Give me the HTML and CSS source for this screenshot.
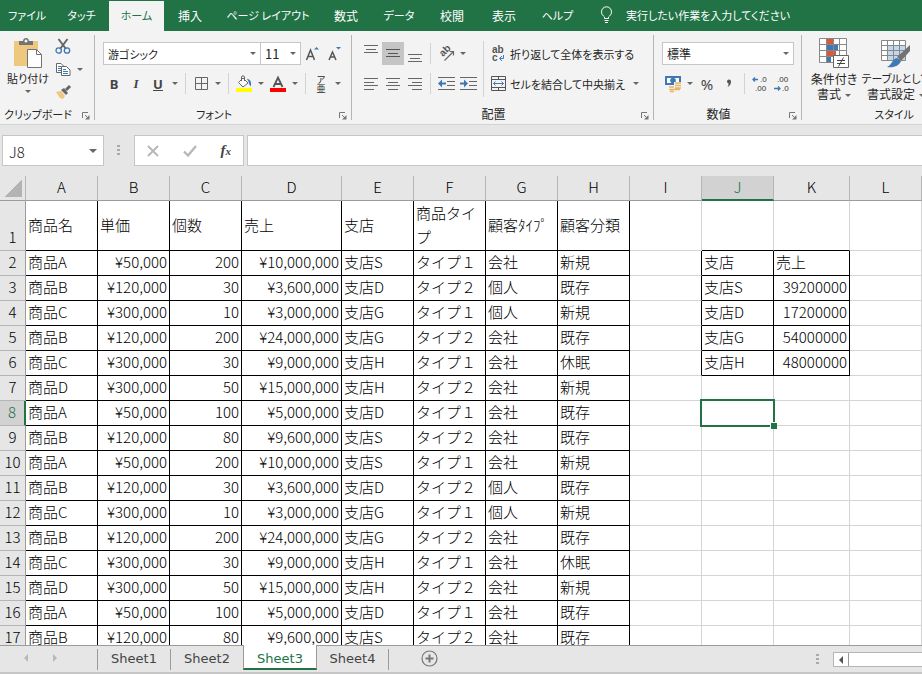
FILE: index.html
```html
<!DOCTYPE html>
<html lang="ja">
<head>
    <meta charset="UTF-8">
    <title>Sheet3</title>
    <link rel="stylesheet" href="styles.css">
</head>
<body>
<nav class="menu">
    <button class="menu-tab kana">ファイル</button>
    <button class="menu-tab kana">タッチ</button>
    <button class="menu-tab kana active">ホーム</button>
    <button class="menu-tab">挿入</button>
    <button class="menu-tab kana">ページ レイアウト</button>
    <button class="menu-tab">数式</button>
    <button class="menu-tab kana">データ</button>
    <button class="menu-tab">校閲</button>
    <button class="menu-tab">表示</button>
    <button class="menu-tab kana">ヘルプ</button>
    <button class="tell-me kana">
        <svg width="13" height="18" viewBox="0 0 13 18" fill="none" stroke="#fff"><path d="M4.500 12.500V11C3 9.500 1.500 8.500 1.500 5.800A5 5 0 0 1 11.500 5.800C11.500 8.500 10 9.500 8.500 11V12.500ZM4.500 14.500H8.500M5 16.500H8"/></svg>
        <span>実行したい作業を入力してください</span>
    </button>
</nav>

<div class="ribbon">
    <section class="group clipboard">
        <div class="group-body">
            <button class="big-btn kana">
                <svg width="30" height="31" viewBox="0 0 30 31"><path d="M1 3H25V28H1Z" fill="#edc87e"/><path d="M6 7V3H10C10-1 16-1 16 3H20V7Z" fill="#737373"/><circle cx="13" cy="3" r="1.500" fill="#f3f3f3"/><path d="M14.500 11.500H23.500L28.500 16.500V29.500H14.500Z" fill="#fff" stroke="#737373"/><path d="M23.500 11.500V16.500H28.500" fill="none" stroke="#737373"/></svg>
                <span>貼り付け</span>
                <i class="caret"></i>
            </button>
            <div class="clip-side">
                <button class="icon-btn" aria-label="切り取り"><svg width="16" height="16" viewBox="0 0 16 16" fill="none"><path d="M3.500 0L11 10M12.500 0L5 10" stroke="#666" stroke-width="2"/><circle cx="3.700" cy="11.500" r="2.700" stroke="#3f79b5" stroke-width="1.300"/><circle cx="12" cy="11.500" r="2.700" stroke="#3f79b5" stroke-width="1.300"/></svg></button>
                <div class="tools">
                    <button class="icon-btn" aria-label="コピー"><svg width="16" height="15" viewBox="0 0 16 15"><path d="M1.500 1.500H6L9.500 5V10.500H1.500Z" fill="#fff" stroke="#666"/><path d="M3 4.500H6M3 6.500H6M3 8.500H6" stroke="#3f79b5"/><path d="M6.500 4.500H11.500L15 8V13.500H6.500Z" fill="#fff" stroke="#666"/><path d="M8 7.500H11M8 9.500H13M8 11.500H13" stroke="#3f79b5"/></svg></button>
                    <button class="caret-btn" aria-label="コピーのオプション"><i class="caret"></i></button>
                </div>
                <button class="icon-btn" aria-label="書式のコピー"><svg width="17" height="15" viewBox="0 0 17 15"><path d="M1 7L6 6L10 11L8 14L5 13Z" fill="#edc87e"/><path d="M6 5L9 3L13 8L11 10Z" fill="#666"/><path d="M11 5L15 1" stroke="#666" stroke-width="3"/></svg></button>
            </div>
        </div>
        <footer class="kana"><span>クリップボード</span><button class="launcher" aria-label="クリップボードの設定"><svg width="8" height="8" viewBox="0 0 8 8"><path d="M.5 6V.5H6M3 3L6 6" fill="none" stroke="#777"/><path d="M7.500 3V7.500H3Z" fill="#777"/></svg></button></footer>
    </section>

    <section class="group font">
        <div class="group-body rows">
            <div class="tools">
                <select class="font-name kana" aria-label="フォント"><option>游ゴシック</option></select>
                <select class="font-size" aria-label="フォント サイズ"><option>11</option></select>
                <button class="icon-btn" aria-label="拡大"><svg width="15" height="16" viewBox="0 0 15 16"><path d="M1.500 14L5.500 4L9.500 14M3 10.500H8" fill="none" stroke="#555" stroke-width="1.500"/><path d="M9 3.500H14L11.500 1Z" fill="#3f79b5"/></svg></button>
                <button class="icon-btn" aria-label="縮小"><svg width="15" height="16" viewBox="0 0 15 16"><path d="M2 14L5.500 6L9 14M3.500 11H7.500" fill="none" stroke="#555" stroke-width="1.500"/><path d="M9 1H14L11.500 3.500Z" fill="#3f79b5"/></svg></button>
            </div>
            <div class="tools">
                <button class="icon-btn bold">B</button>
                <button class="icon-btn italic">I</button>
                <button class="icon-btn underline">U</button>
                <button class="caret-btn" aria-label="下線"><i class="caret"></i></button>
                <i class="sep"></i>
                <button class="icon-btn" aria-label="罫線"><svg width="13" height="13" viewBox="0 0 13 13" fill="none" stroke="#666"><path d="M.5.5H12.500V12.500H.5ZM.5 6.500H12.500M6.500.5V12.500"/></svg></button>
                <button class="caret-btn" aria-label="罫線の種類"><i class="caret"></i></button>
                <i class="sep"></i>
                <button class="icon-btn" aria-label="塗りつぶしの色"><svg width="16" height="17" viewBox="0 0 16 17"><path d="M2.500 7.500L7 3L12 8L7 12Z" fill="#fff" stroke="#666"/><path d="M5.500 6V2C5.500.5 8.500.5 8.500 2V6" fill="none" stroke="#666"/><path d="M11 4C14 4 15.500 6 15 11C12.500 10.500 13.500 7 11 4Z" fill="#3f79b5"/><path d="M0 13H16V17H0Z" fill="#ff0"/></svg></button>
                <button class="caret-btn" aria-label="色を選択"><i class="caret"></i></button>
                <button class="icon-btn" aria-label="フォントの色"><svg width="16" height="17" viewBox="0 0 16 17"><path d="M3.500 12L8 2.500L12.500 12M5 9H11" fill="none" stroke="#555" stroke-width="1.800"/><path d="M0 13H16V17H0Z" fill="#f00"/></svg></button>
                <button class="caret-btn" aria-label="フォントの色を選択"><i class="caret"></i></button>
                <i class="sep"></i>
                <button class="icon-btn ruby"><span>ア</span><span>亜</span></button>
                <button class="caret-btn" aria-label="ふりがな"><i class="caret"></i></button>
            </div>
        </div>
        <footer class="kana"><span>フォント</span><button class="launcher" aria-label="フォントの設定"><svg width="8" height="8" viewBox="0 0 8 8"><path d="M.5 6V.5H6M3 3L6 6" fill="none" stroke="#777"/><path d="M7.500 3V7.500H3Z" fill="#777"/></svg></button></footer>
    </section>

    <section class="group align">
        <div class="group-body">
            <div class="rows align-left">
                <div class="tools">
                    <button class="icon-btn" aria-label="上揃え"><svg width="14" height="18" viewBox="0 0 14 18" stroke="#666"><path d="M0 .5H14M2 4.500H12M0 7.500H14"/></svg></button>
                    <button class="icon-btn pressed" aria-label="上下中央揃え"><svg width="14" height="18" viewBox="0 0 14 18" stroke="#555"><path d="M0 4.500H14M2 8.500H12M0 11.500H14"/></svg></button>
                    <button class="icon-btn" aria-label="下揃え"><svg width="14" height="18" viewBox="0 0 14 18" stroke="#666"><path d="M0 9.500H14M2 13.500H12M0 16.500H14"/></svg></button>
                    <i class="sep"></i>
                    <button class="icon-btn" aria-label="方向"><svg width="17" height="16" viewBox="0 0 17 16"><text transform="translate(5 11) rotate(-45)" class="svg-ab">ab</text><path d="M6.500 14.500L15 6M11.500 5.500H15.500V9.500" fill="none" stroke="#666" stroke-width="1.200"/></svg></button>
                    <button class="caret-btn" aria-label="方向を選択"><i class="caret"></i></button>
                </div>
                <div class="tools">
                    <button class="icon-btn" aria-label="左揃え"><svg width="14" height="12" viewBox="0 0 14 12" stroke="#666"><path d="M0 .5H14M0 4.500H10M0 7.500H14M0 11.500H10"/></svg></button>
                    <button class="icon-btn" aria-label="中央揃え"><svg width="14" height="12" viewBox="0 0 14 12" stroke="#666"><path d="M0 .5H14M2 4.500H12M0 7.500H14M2 11.500H12"/></svg></button>
                    <button class="icon-btn" aria-label="右揃え"><svg width="14" height="12" viewBox="0 0 14 12" stroke="#666"><path d="M0 .5H14M4 4.500H14M0 7.500H14M4 11.500H14"/></svg></button>
                    <i class="sep"></i>
                    <button class="icon-btn" aria-label="インデントを減らす"><svg width="17" height="14" viewBox="0 0 17 14"><path d="M0 .5H17M9 4.500H17M9 8.500H17M0 12.500H17" stroke="#666"/><path d="M0 6.500L4 2.500V5.500H8V7.500H4V10.500Z" fill="#3f79b5"/></svg></button>
                    <button class="icon-btn" aria-label="インデントを増やす"><svg width="17" height="14" viewBox="0 0 17 14"><path d="M0 .5H17M9 4.500H17M9 8.500H17M0 12.500H17" stroke="#666"/><path d="M8 6.500L4 2.500V5.500H0V7.500H4V10.500Z" fill="#3f79b5"/></svg></button>
                </div>
            </div>
            <i class="sep tall"></i>
            <div class="rows">
                <div class="tools">
                    <button class="text-btn kana"><svg width="15" height="18" viewBox="0 0 15 18"><text x="1" y="8" class="svg-ab">ab</text><text x="1" y="16" class="svg-ab">c</text><path d="M12.500 10V13.500H9M11 11L8.500 13.500L11 16" fill="none" stroke="#3f79b5"/></svg><span>折り返して全体を表示する</span></button>
                </div>
                <div class="tools">
                    <button class="text-btn kana"><svg width="15" height="15" viewBox="0 0 15 15" fill="none"><path d="M.5.5H14.500V14.500H.5ZM.5 3.500H14.500M.5 11.500H14.500M7.500.5V3.500M7.500 11.500V14.500" stroke="#555"/><path d="M2.500 7.500H12.500M4.500 5.500L2.500 7.500L4.500 9.500M10.500 5.500L12.500 7.500L10.500 9.500" stroke="#3f79b5"/></svg><span>セルを結合して中央揃え</span></button>
                    <button class="caret-btn merge-more" aria-label="結合の種類"><i class="caret"></i></button>
                </div>
            </div>
        </div>
        <footer><span>配置</span><button class="launcher" aria-label="配置の設定"><svg width="8" height="8" viewBox="0 0 8 8"><path d="M.5 6V.5H6M3 3L6 6" fill="none" stroke="#777"/><path d="M7.500 3V7.500H3Z" fill="#777"/></svg></button></footer>
    </section>

    <section class="group number">
        <div class="group-body rows">
            <div class="tools">
                <select class="num-format" aria-label="数値の書式"><option>標準</option></select>
            </div>
            <div class="tools">
                <button class="icon-btn" aria-label="通貨表示形式"><svg width="17" height="16" viewBox="0 0 17 16"><path d="M0 0H16V9H0Z" fill="#3f79b5"/><path d="M2 2H14V7H2Z" fill="#fff"/><circle cx="8" cy="4.500" r="2.800" fill="#3f79b5"/><path d="M9 6H17V16H4V9H9Z" fill="#f3f3f3"/><path d="M10 7H16M10 9.500H16M10 12H16M4 11H9M4 13.500H15M5 15.500H9" stroke="#e8b566" stroke-width="1.600"/></svg></button>
                <button class="caret-btn" aria-label="通貨を選択"><i class="caret"></i></button>
                <button class="icon-btn percent">%</button>
                <button class="icon-btn" aria-label="桁区切りスタイル"><svg width="6" height="9" viewBox="0 0 6 9"><path d="M1 2.500A2 2 0 0 1 5 2.500C5 5 4 7 1.500 8C2.500 6.500 2.500 5.500 2.500 4.500Q1 4 1 2.500Z" fill="#555"/></svg></button>
                <i class="sep"></i>
                <button class="icon-btn" aria-label="小数点以下の表示桁数を増やす"><svg width="16" height="16" viewBox="0 0 16 16"><text x="8" y="6" class="svg-num">.0</text><text x="3" y="15" class="svg-num">.00</text><path d="M6 3.500H1M3 1.500L1 3.500L3 5.500" fill="none" stroke="#3f79b5" stroke-width="1.300"/></svg></button>
                <button class="icon-btn" aria-label="小数点以下の表示桁数を減らす"><svg width="16" height="16" viewBox="0 0 16 16"><text x="3" y="6" class="svg-num">.00</text><text x="8" y="15" class="svg-num">.0</text><path d="M0 12.500H6M4 10.500L6 12.500L4 14.500" fill="none" stroke="#3f79b5" stroke-width="1.300"/></svg></button>
            </div>
        </div>
        <footer><span>数値</span><button class="launcher" aria-label="数値の設定"><svg width="8" height="8" viewBox="0 0 8 8"><path d="M.5 6V.5H6M3 3L6 6" fill="none" stroke="#777"/><path d="M7.500 3V7.500H3Z" fill="#777"/></svg></button></footer>
    </section>

    <section class="group styles">
        <div class="group-body">
            <button class="big-btn">
                <svg width="30" height="31" viewBox="0 0 30 31"><path d="M.5.5H27.500V24.500H.5Z" fill="#fff"/><path d="M8 1H14V6H8ZM8 13H17V18H8Z" fill="#d9583b"/><path d="M8 7H19V12H8ZM8 19H12V24H8Z" fill="#3f79b5"/><path d="M.5.5H27.500V24.500H.5ZM.5 6.500H27.500M.5 12.500H27.500M.5 18.500H27.500M7.500.5V24.500M14.500.5V24.500M20.500.5V24.500" fill="none" stroke="#888"/><path d="M14.500 17.500H29.500V29.500H14.500Z" fill="#fff" stroke="#666"/><path d="M18 22.500H26M18 25.500H26M24.500 19.500L19.500 28.500" stroke="#444"/></svg>
                <span>条件付き</span>
                <span>書式<i class="caret"></i></span>
            </button>
            <button class="big-btn">
                <svg width="30" height="31" viewBox="0 0 30 31"><path d="M.5 2.500H24.500V22.500H.5Z" fill="#fff"/><path d="M7 8H24V22H7Z" fill="#c3d7ec"/><path d="M.5 2.500H24.500V22.500H.5ZM.5 7.500H24.500M.5 12.500H24.500M.5 17.500H24.500M6.500 2.500V22.500M12.500 2.500V22.500M18.500 2.500V22.500" fill="none" stroke="#888"/><path d="M29 7V13L20 23L16 19Z" fill="#737373"/><path d="M16 20L20 23C18 28 13 30 6 29C11 27 11 21 16 20Z" fill="#3f79b5"/></svg>
                <span class="kana">テーブルとして</span>
                <span>書式設定<i class="caret"></i></span>
            </button>
        </div>
        <footer class="kana"><span>スタイル</span></footer>
    </section>
</div>

<div class="formula-bar">
    <select class="name-box" aria-label="名前ボックス"><option>J8</option></select>
    <i class="dots"></i>
    <div class="fx-box">
        <button aria-label="キャンセル"><svg width="12" height="12" viewBox="0 0 12 12"><path d="M1 1L11 11M11 1L1 11" stroke="#b8b8b8" stroke-width="2"/></svg></button>
        <button aria-label="入力"><svg width="14" height="12" viewBox="0 0 14 12"><path d="M1 6.500L5 10.500L13 1" fill="none" stroke="#b8b8b8" stroke-width="2.400"/></svg></button>
        <button class="fx">f<small>x</small></button>
    </div>
    <input class="formula" type="text" aria-label="数式バー">
</div>

<main class="grid">
    <table class="sheet">
        <colgroup>
            <col class="c-head"><col><col><col><col class="c-wide"><col><col><col><col><col><col><col class="c-k"><col>
        </colgroup>
        <thead id="sheet-head"></thead>
        <tbody id="sheet-body"></tbody>
    </table>
</main>

<div class="sheet-bar">
    <div class="sheet-nav">
        <button class="prev" aria-label="前のシート"></button>
        <button class="next" aria-label="次のシート"></button>
    </div>
    <button class="sheet-tab">Sheet1</button>
    <button class="sheet-tab">Sheet2</button>
    <button class="sheet-tab current">Sheet3</button>
    <button class="sheet-tab last">Sheet4</button>
    <button class="add-sheet" aria-label="新しいシート"><svg width="17" height="17" viewBox="0 0 17 17" fill="none" stroke="#777"><circle cx="8.500" cy="8.500" r="7.500" stroke-width="1.200"/><path d="M4.500 8.500H12.500M8.500 4.500V12.500" stroke-width="2"/></svg></button>
    <i class="dots"></i>
    <div class="scroll"><button aria-label="左へスクロール"></button></div>
</div>

<script>
    const columns = 'ABCDEFGHIJKL'.split('');
    const headings = ['商品名', '単価', '個数', '売上', '支店', '商品タイプ', '顧客ﾀｲﾌﾟ', '顧客分類'];

    // 商品, 単価, 個数, 売上, 支店, タイプ, 顧客タイプ, 顧客分類
    const sales = [
        ['商品A', '¥50,000', '200', '¥10,000,000', '支店S', 'タイプ１', '会社', '新規'],
        ['商品B', '¥120,000', '30', '¥3,600,000', '支店D', 'タイプ２', '個人', '既存'],
        ['商品C', '¥300,000', '10', '¥3,000,000', '支店G', 'タイプ１', '個人', '新規'],
        ['商品B', '¥120,000', '200', '¥24,000,000', '支店G', 'タイプ２', '会社', '既存'],
        ['商品C', '¥300,000', '30', '¥9,000,000', '支店H', 'タイプ１', '会社', '休眠'],
        ['商品D', '¥300,000', '50', '¥15,000,000', '支店H', 'タイプ２', '会社', '新規'],
        ['商品A', '¥50,000', '100', '¥5,000,000', '支店D', 'タイプ１', '会社', '既存'],
        ['商品B', '¥120,000', '80', '¥9,600,000', '支店S', 'タイプ２', '会社', '既存']
    ];

    // J列とK列の集計表 (キーは行番号)
    const totals = {
        2: ['支店', '売上'],
        3: ['支店S', '39200000'],
        4: ['支店D', '17200000'],
        5: ['支店G', '54000000'],
        6: ['支店H', '48000000']
    };

    const selected = { row: 8, col: 'J' };

    // 列見出し
    const headRow = document.getElementById('sheet-head').insertRow();
    headRow.innerHTML = '<th class="corner"></th>' + columns.map(c =>
        `<th class="${c === selected.col ? 'on' : ''}">${c}</th>`).join('');

    // 各行
    const body = document.getElementById('sheet-body');
    for (let r = 1; r <= 17; r++) {
        const row = body.insertRow();
        const data = r === 1 ? headings : sales[(r - 2) % sales.length];
        const head = document.createElement('th');
        head.textContent = r;
        if (r === selected.row) head.className = 'on';
        row.appendChild(head);

        columns.forEach((c, i) => {
            const cell = row.insertCell();
            if (i < 8) {
                cell.textContent = data[i];
                cell.classList.add('boxed');
            } else if (totals[r] && (c === 'J' || c === 'K')) {
                cell.textContent = totals[r][c === 'J' ? 0 : 1];
                cell.classList.add('boxed');
            }
            if (/^[¥\d]/.test(cell.textContent)) cell.classList.add('num');
            if (totals[r] && c === 'I') cell.classList.add('line-right');
            if (r === 1 && (c === 'J' || c === 'K')) cell.classList.add('line-bottom');
            if (r === selected.row && c === selected.col) cell.classList.add('selected');
        });
    }
</script>
</body>
</html>
```
FILE: styles.css
```css
* {
    box-sizing: border-box;
}

body {
    margin: 0;
    height: 100vh;
    display: flex;
    flex-direction: column;
    overflow: hidden;
    background: #e6e6e6;
    color: #262626;
    font-family: "Noto Sans CJK JP", sans-serif;
    font-size: 12px;
}

button, select, input {
    font: inherit;
    color: inherit;
    padding: 0;
    margin: 0;
    border: none;
    background: none;
    border-radius: 0;
}

svg {
    display: block;
    flex: none;
    overflow: visible;
}

/* かなの多いラベル */
.kana {
    font-size: 11px;
}

/* メニュー */
.menu {
    flex: none;
    height: 31px;
    padding-top: 1px;
    display: grid;
    grid-template-columns: 54px 55px 55px 52px 104px 52px 54px 52px 52px 55px 1fr;
    background: #217346;
    color: #fff;
    font-feature-settings: "palt";
}

.menu button {
    padding-bottom: 2px;
    white-space: nowrap;
}

.menu .active {
    background: #f3f3f3;
    color: #217346;
}

.menu .tell-me {
    display: flex;
    align-items: center;
    gap: 13px;
    padding-left: 15px;
}

/* リボン */
.ribbon {
    flex: none;
    display: flex;
    height: 94px;
    padding: 4px 0;
    overflow: hidden;
    background: #f3f3f3;
    border-bottom: 1px solid #d2d2d2;
    font-feature-settings: "palt";
}

.group {
    flex: none;
    display: flex;
    flex-direction: column;
    border-right: 1px solid #b5b5b5;
}

.group-body {
    flex: 1;
    display: flex;
}

.group footer {
    position: relative;
    height: 14px;
    line-height: 16px;
    text-align: center;
}

.launcher {
    position: absolute;
    right: 4px;
    bottom: 0;
}

.clipboard {
    width: 95px;
}

.font {
    width: 257px;
}

.font .group-body,
.align .group-body,
.number .group-body {
    padding-left: 8px;
}

.clipboard footer,
.font footer,
.align footer,
.number footer {
    padding-right: 18px;
}

.align {
    width: 302px;
}

.align-left {
    width: 123px;
}

.number {
    width: 148px;
}

.styles {
    width: 184px;
    border-right: none;
}

.rows {
    display: flex;
    flex-direction: column;
    gap: 7px;
    padding-top: 7px;
}

.tools {
    display: flex;
    align-items: center;
    height: 23px;
}

.icon-btn {
    width: 22px;
    height: 23px;
    display: flex;
    align-items: center;
    justify-content: center;
}

.pressed {
    background: #c5c5c5;
}

.caret-btn {
    width: 12px;
    height: 23px;
    display: flex;
    align-items: center;
    justify-content: center;
}

.caret {
    display: inline-block;
    border: 3px solid transparent;
    border-top-color: #666;
    border-bottom: none;
}

.sep {
    width: 1px;
    height: 21px;
    margin: 0 4px;
    background: #d2d2d2;
}

.sep.tall {
    height: 56px;
    margin: 6px 7px 0 0;
}

.big-btn {
    display: flex;
    flex-direction: column;
    align-items: center;
    width: 62px;
    padding-top: 3px;
    line-height: 15px;
    white-space: nowrap;
}

.big-btn svg {
    margin-bottom: 2px;
}

.big-btn span .caret {
    margin-left: 4px;
    vertical-align: middle;
}

.clipboard .big-btn {
    width: 52px;
    padding-left: 4px;
}

.clipboard .big-btn .caret {
    margin-top: 4px;
}

.styles .group-body {
    padding-left: 1px;
}

.text-btn {
    display: flex;
    align-items: center;
    gap: 4px;
    white-space: nowrap;
}

.merge-more {
    margin-left: 5px;
}

.ribbon select {
    height: 23px;
    padding: 0 4px;
    border: 1px solid #c6c6c6;
}

select {
    appearance: none;
    background: #fff url("data:image/svg+xml,%3Csvg xmlns='http://www.w3.org/2000/svg' width='6' height='3'%3E%3Cpath d='M0 0H6L3 3Z' fill='%23666'/%3E%3C/svg%3E") no-repeat right 4px center;
}

.font-name {
    width: 158px;
}

.ribbon .font-size {
    width: 40px;
    border-left: none;
    font-size: 13px;
}

.num-format {
    width: 132px;
}

.bold,
.italic,
.underline {
    color: #444;
    font-family: "Noto Sans", sans-serif;
    font-size: 13px;
    font-weight: bold;
}

.italic {
    font-family: "Liberation Serif", serif;
    font-style: italic;
}

.underline {
    text-decoration: underline;
}

.ruby {
    flex-direction: column;
    font-size: 9px;
    line-height: 9px;
}

.percent {
    font-family: "Noto Sans", sans-serif;
    font-size: 15px;
    color: #444;
}

.svg-ab {
    font: bold 10px "Liberation Sans", sans-serif;
    fill: #555;
}

.svg-num {
    font: 8px "Liberation Sans", sans-serif;
    fill: #333;
}

/* 数式バー */
.formula-bar {
    flex: none;
    display: flex;
    height: 51px;
    padding: 10px 0 10px 2px;
}

.name-box {
    width: 102px;
    padding: 2px 6px 0;
    border: 1px solid #c6c6c6;
    background-size: 8px 4px;
    background-position: right 6px center;
    font-size: 15px;
    font-weight: 300;
}

.dots {
    width: 3px;
    height: 11px;
    background: repeating-linear-gradient(#aaa 0 2px, transparent 2px 4px);
}

.formula-bar .dots {
    margin: 10px 14px 0 13px;
}

.fx-box {
    display: flex;
    align-items: center;
    justify-content: space-around;
    width: 110px;
    margin-right: 3px;
    background: #fff;
    border: 1px solid #c6c6c6;
}

.fx {
    color: #444;
    font: italic bold 15px "Liberation Serif", serif;
}

.fx small {
    font-size: 11px;
}

.formula {
    flex: 1;
    min-width: 0;
    padding: 0 6px;
    background: #fff;
    border: 1px solid #c6c6c6;
    border-right: none;
}

/* シート */
.grid {
    flex: 1;
    min-height: 0;
    overflow: hidden;
    background: #fff;
}

.sheet {
    width: 922px;
    table-layout: fixed;
    border-collapse: separate;
    border-spacing: 0;
    color: #000;
    font-size: 15px;
    font-weight: 300;
}

.sheet col {
    width: 72px;
}

.sheet .c-head {
    width: 26px;
}

.sheet .c-wide {
    width: 100px;
}

.sheet .c-k {
    width: 76px;
}

.sheet th {
    padding: 0 0 2px;
    background: #e6e6e6;
    font-weight: 300;
    line-height: 22px;
}

.sheet thead th {
    height: 25px;
    border-right: 1px solid #b5b5b5;
    border-bottom: 1px solid #9b9b9b;
}

.sheet tbody th {
    height: 25px;
    border-right: 1px solid #9b9b9b;
    border-bottom: 1px solid #b5b5b5;
    vertical-align: bottom;
}

.sheet thead .on {
    padding-bottom: 1px;
    background: #d2d2d2;
    color: #217346;
    border-bottom: 2px solid #217346;
}

.sheet tbody .on {
    background: #d2d2d2;
    color: #217346;
    border-right: 2px solid #217346;
}

.sheet .corner {
    background: linear-gradient(135deg, transparent 50%, #b3b3b3 50%) no-repeat 5px 4px / 17px 17px #e6e6e6;
}

.sheet td {
    height: 25px;
    padding: 0 2px 2px;
    line-height: 22px;
    border-right: 1px solid #d4d4d4;
    border-bottom: 1px solid #d4d4d4;
}

.sheet tbody tr:first-child td {
    height: 50px;
    padding-bottom: 1px;
    line-height: 24px;
}

.sheet .boxed {
    border-color: #000;
}

.sheet .line-right {
    border-right-color: #000;
}

.sheet .line-bottom {
    border-bottom-color: #000;
}

.sheet .num {
    text-align: right;
}

.selected {
    position: relative;
}

/* 選択枠とフィルハンドル */
.selected::before {
    content: "";
    position: absolute;
    inset: -2px;
    border: 2px solid #217346;
}

.selected::after {
    content: "";
    position: absolute;
    right: -4px;
    bottom: -4px;
    width: 6px;
    height: 6px;
    background: #217346;
    border: 1px solid #fff;
    border-width: 1px 0 0 1px;
}

/* シート見出し */
.sheet-bar {
    flex: none;
    display: flex;
    height: 29px;
    padding-bottom: 4px;
    border-top: 1px solid #9b9b9b;
    box-shadow: inset 0 -2px #c6c6c6;
    color: #444;
    font-family: "DejaVu Sans", sans-serif;
    font-size: 13px;
}

.sheet-nav {
    width: 97px;
    display: flex;
    align-items: center;
    gap: 25px;
    padding-left: 24px;
}

.prev,
.next {
    border: 4px solid transparent;
}

.prev {
    border-right-color: #b8b8b8;
    border-left: none;
}

.next {
    border-left-color: #b8b8b8;
    border-right: none;
}

.sheet-tab {
    width: 73px;
    margin-top: 3px;
    padding-bottom: 3px;
    border-left: 1px solid #9b9b9b;
}

.sheet-tab.last {
    width: 72px;
    border-left: none;
    border-right: 1px solid #9b9b9b;
}

.sheet-tab.current {
    width: 74px;
    margin-top: -1px;
    padding: 3px 0 0;
    background: #fff;
    color: #217346;
    border-right: 1px solid #9b9b9b;
    border-bottom: 2px solid #217346;
}

.add-sheet {
    margin-left: 32px;
}

.sheet-bar .dots {
    margin: 8px 14px 0 auto;
}

.scroll {
    width: 89px;
    height: 15px;
    margin-top: 6px;
    background: #fff;
    border: 1px solid #b5b5b5;
    border-right: none;
}

.scroll button {
    display: flex;
    align-items: center;
    justify-content: center;
    width: 15px;
    height: 13px;
    border-right: 1px solid #9b9b9b;
}

.scroll button::before {
    content: "";
    border: 4px solid transparent;
    border-right-color: #555;
    border-left: none;
}
```
